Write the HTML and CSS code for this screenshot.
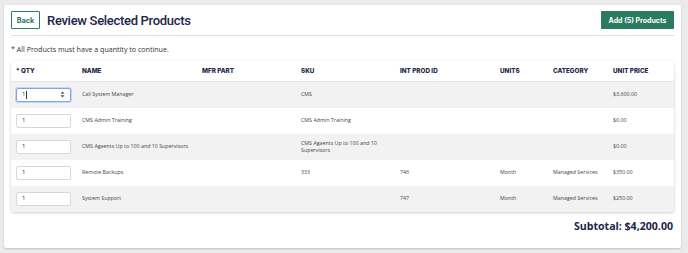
FILE: index.html
```html
<!DOCTYPE html>
<html lang="en">
<head>
<meta charset="utf-8">
<title>Review Selected Products</title>
<link rel="stylesheet" href="styles.css">
</head>
<body>
<div class="page">
  <div class="card">
    <div class="topbar">
      <div class="title-group">
        <button class="btn-back">Back</button>
        <h1 class="title">Review Selected Products</h1>
      </div>
      <button class="btn-add">Add (5) Products</button>
    </div>
    <p class="note">* All Products must have a quantity to continue.</p>
    <div class="table-wrap">
      <table class="products">
        <colgroup>
          <col class="c-qty"><col class="c-name"><col class="c-mfr"><col class="c-sku"><col class="c-int"><col class="c-units"><col class="c-cat"><col class="c-price">
        </colgroup>
        <thead>
          <tr><th>* QTY</th><th>NAME</th><th>MFR PART</th><th>SKU</th><th>INT PROD ID</th><th>UNITS</th><th>CATEGORY</th><th>UNIT PRICE</th></tr>
        </thead>
        <tbody>
          <tr class="alt">
            <td><div class="qty focused"><span class="qv">1</span><span class="caret"></span><span class="grow"></span>
              <svg class="spin" width="5" height="7" viewBox="0 0 5 7"><path d="M2.5 0.5 L4.5 2.8 L0.5 2.8 Z M2.5 6.5 L4.5 4.2 L0.5 4.2 Z" fill="#555"/></svg></div></td>
            <td>Call System Manager</td><td></td><td>CMS</td><td></td><td></td><td></td><td>$3,600.00</td>
          </tr>
          <tr>
            <td><div class="qty"><span class="qv">1</span></div></td>
            <td>CMS Admin Training</td><td></td><td>CMS Admin Training</td><td></td><td></td><td></td><td>$0.00</td>
          </tr>
          <tr class="alt">
            <td><div class="qty"><span class="qv">1</span></div></td>
            <td>CMS Agaents Up to 100 and 10 Supervisors</td><td></td><td>CMS Agaents Up to 100 and 10 Supervisors</td><td></td><td></td><td></td><td>$0.00</td>
          </tr>
          <tr>
            <td><div class="qty"><span class="qv">1</span></div></td>
            <td>Remote Backups</td><td></td><td>333</td><td>746</td><td>Month</td><td>Managed Services</td><td>$350.00</td>
          </tr>
          <tr class="alt">
            <td><div class="qty"><span class="qv">1</span></div></td>
            <td>System Support</td><td></td><td></td><td>747</td><td>Month</td><td>Managed Services</td><td>$250.00</td>
          </tr>
        </tbody>
      </table>
    </div>
    <div class="subtotal">Subtotal: $4,200.00</div>
  </div>
</div>
</body>
</html>
```

FILE: styles.css
```css
html, body {
  margin: 0;
  padding: 0;
  background: #ebebeb;
}
body {
  font-family: "Open Sans", "Liberation Sans", sans-serif;
  color: #333;
}
.page {
  padding: 5px 7px 5px 4px;
}
.card {
  background: #fff;
  border-radius: 2px;
  box-shadow: 0 1px 2px rgba(0,0,0,0.18);
  padding: 6px 7px 0 7px;
  height: 243px;
  box-sizing: border-box;
}
.topbar {
  display: flex;
  align-items: center;
  justify-content: space-between;
  padding-bottom: 6px;
  border-bottom: 1px solid #dedede;
}
.title-group {
  display: flex;
  align-items: center;
  gap: 7px;
}
.btn-back {
  height: 18px;
  width: 29px;
  padding: 0;
  background: #fff;
  border: 1px solid #2b7a62;
  border-radius: 1px;
  color: #2b7a62;
  font-family: "Inter", "Liberation Sans", sans-serif;
  font-weight: 700;
  font-size: 7.3px;
}
.title {
  margin: 0;
  font-family: "Roboto", "Liberation Sans", sans-serif;
  font-weight: 500;
  font-size: 13px;
  color: #1c2647;
  letter-spacing: -0.3px;
}
.btn-add {
  height: 18px;
  width: 73px;
  padding: 0;
  background: #2b7a62;
  border: none;
  border-radius: 1px;
  color: #fff;
  font-family: "Inter", "Liberation Sans", sans-serif;
  font-weight: 700;
  font-size: 7px;
}
.note {
  margin: 0;
  padding: 8px 0 0 0;
  height: 17px;
  font-size: 7.1px;
  line-height: 10px;
  color: #333;
}
.table-wrap {
  border-radius: 3px;
  box-shadow: 0 1px 3px rgba(0,0,0,0.2);
  overflow: hidden;
}
.products {
  width: 100%;
  border-collapse: collapse;
  table-layout: fixed;
}
.c-qty { width: 66px; }
.c-name { width: 120px; }
.c-mfr { width: 99px; }
.c-sku { width: 99px; }
.c-int { width: 100px; }
.c-units { width: 53px; }
.c-cat { width: 60px; }
.c-price { width: 66px; }
.products th {
  height: 20px;
  padding: 0 5px;
  text-align: left;
  font-family: "Inter", "Liberation Sans", sans-serif;
  font-weight: 800;
  font-size: 6.3px;
  color: #1c2647;
  background: #fff;
  border-bottom: 1px solid #e6e6e6;
}
.products td {
  height: 26px;
  padding: 0 2px 0 5px;
  font-size: 5.3px;
  line-height: 7px;
  color: #444;
  vertical-align: middle;
  box-sizing: border-box;
}
.products tr.alt td {
  background: #f2f2f2;
}
.qty {
  display: flex;
  align-items: center;
  width: 55px;
  height: 14px;
  box-sizing: border-box;
  border: 1px solid #d8d8d8;
  border-radius: 2px;
  background: #fff;
  padding: 0 5px 0 5px;
  font-size: 6px;
  color: #333;
}
.qty.focused {
  border-color: #7aa7e8;
  box-shadow: 0 0 0 1px rgba(122,167,232,0.35);
}
.caret {
  display: inline-block;
  width: 0.6px;
  height: 8px;
  background: #333;
  margin-left: 1px;
}
.grow { flex: 1; }
.spin { display: block; }
.subtotal {
  text-align: right;
  padding: 7px 1px 0 0;
  font-family: "Open Sans", "Liberation Sans", sans-serif;
  font-weight: 700;
  font-size: 10.6px;
  color: #1c2647;
}
```
